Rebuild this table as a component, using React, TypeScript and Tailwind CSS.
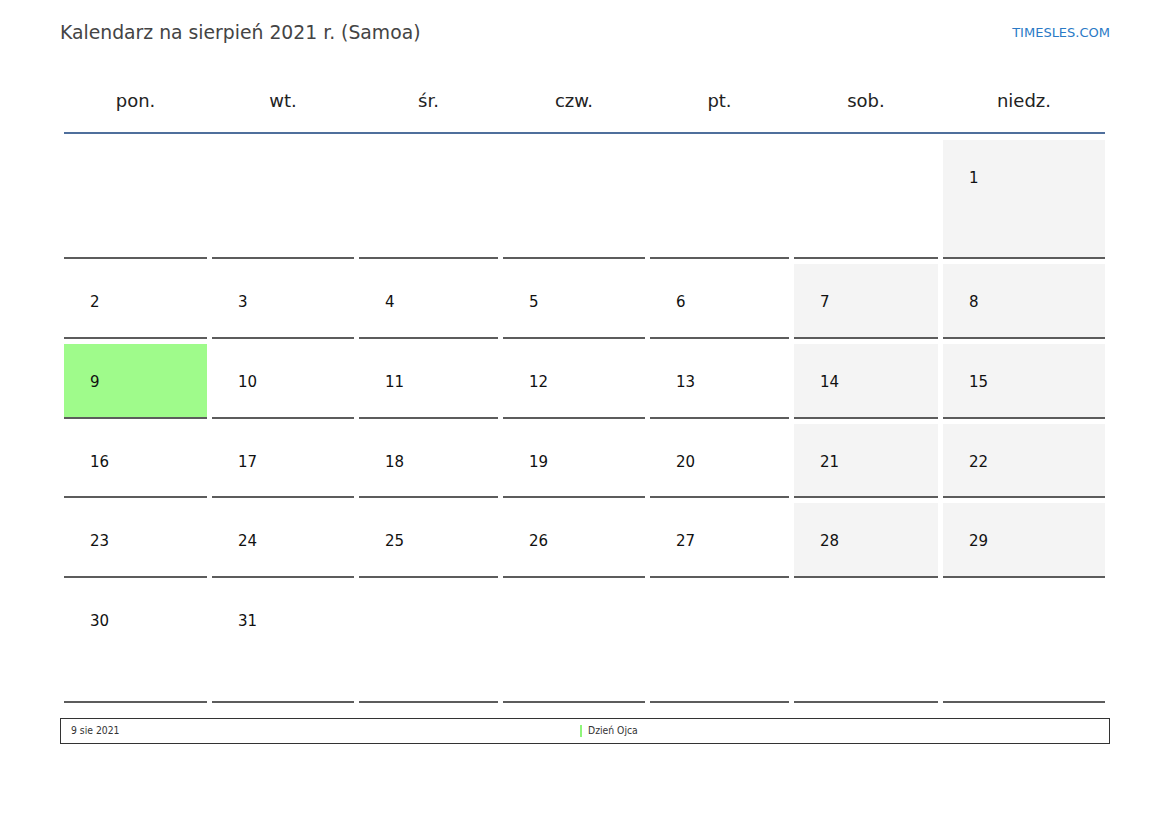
const days = ["pon.", "wt.", "śr.", "czw.", "pt.", "sob.", "niedz."];

// null = empty cell
const weeks: (number | null)[][] = [
  [null, null, null, null, null, null, 1],
  [2, 3, 4, 5, 6, 7, 8],
  [9, 10, 11, 12, 13, 14, 15],
  [16, 17, 18, 19, 20, 21, 22],
  [23, 24, 25, 26, 27, 28, 29],
  [30, 31, null, null, null, null, null],
];

const rowHeights = ["h-[119px]", "h-[75px]", "h-[75px]", "h-[74px]", "h-[75px]", "h-[120px]"];

const cols = "grid grid-cols-[143px_142px_139px_142px_139px_144px_162px] gap-x-[5px]";

function Cell({ day, col, height }: { day: number | null; col: number; height: string }) {
  let bg = "bg-white";
  if (day === 9) bg = "bg-[#9ffb8b]";
  else if (day !== null && col >= 5) bg = "bg-[#f4f4f4]";
  return (
    <div className={`${height} ${bg} border-b-2 border-[#5c5c5c] pl-[26px] pt-[26px]`}>
      {day !== null && <span className="text-[15px] leading-[20px] text-[#111]">{day}</span>}
    </div>
  );
}

export default function App() {
  return (
    <div className="w-[1169px] h-[827px] bg-white pl-[60px] pr-[59px] pt-[20px] font-['DejaVu_Sans',sans-serif]">
      <div className="flex items-center justify-between h-[26px]">
        <h1 className="text-[18.8px] text-[#444]">Kalendarz na sierpień 2021 r. (Samoa)</h1>
        <span className="text-[13px] text-[#2a7ac6]">TIMESLES.COM</span>
      </div>

      <div className="ml-[4px] w-[1041px] mt-[22px]">
        <div className={`${cols} h-[66px] border-b-2 border-[#4f6f9c]`}>
          {days.map((d) => (
            <div key={d} className="flex items-center justify-center text-[18px] text-[#222]">
              {d}
            </div>
          ))}
        </div>
        <div className="flex flex-col gap-y-[5px] mt-[6px]">
          {weeks.map((w, i) => (
            <div key={i} className={cols}>
              {w.map((d, j) => (
                <Cell key={j} day={d} col={j} height={rowHeights[i]} />
              ))}
            </div>
          ))}
        </div>
      </div>

      <div className="mt-[15px] h-[26px] border-[1.5px] border-[#333] flex items-center text-[10.3px] text-[#333] font-['DejaVu_Sans_Condensed','DejaVu_Sans',sans-serif]">
        <div className="w-[519px] pl-[10px]">9 sie 2021</div>
        <div className="flex items-center gap-[6px]">
          <span className="w-[2px] h-[12px] bg-[#8ff57a]" />
          <span>Dzień Ojca</span>
        </div>
      </div>
    </div>
  );
}
